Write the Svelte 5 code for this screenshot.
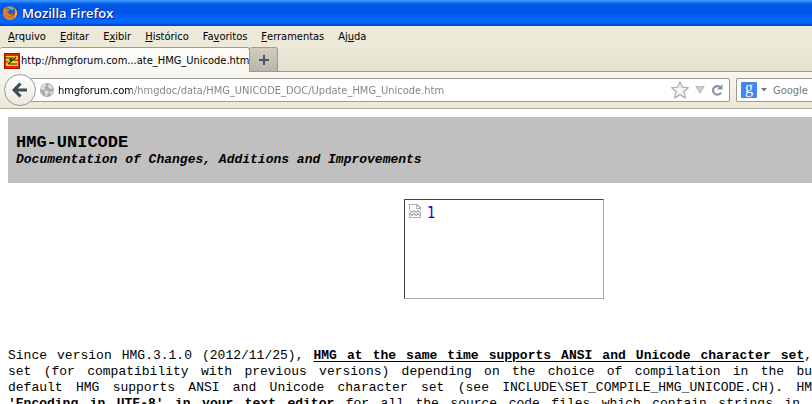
<script>
  const menus = [
    ['', 'A', 'rquivo'],
    ['', 'E', 'ditar'],
    ['E', 'x', 'ibir'],
    ['', 'H', 'istórico'],
    ['Fa', 'v', 'oritos'],
    ['', 'F', 'erramentas'],
    ['Aj', 'u', 'da'],
  ];
  let url = $state('hmgforum.com/hmgdoc/data/HMG_UNICODE_DOC/Update_HMG_Unicode.htm');
  let query = $state('');
</script>

<div class="window">
  <header class="titlebar">
    <svg width="16" height="16" viewBox="0 0 16 16" aria-hidden="true">
      <circle cx="8" cy="8" r="7" fill="#f08a1c" />
      <circle cx="8.2" cy="6.4" r="5.4" fill="#2e62b0" />
      <path d="M5 2.5C7 .8 11 1.5 12 4L10 5 8 4Z" fill="#61b5e6" />
      <path d="M1 6.5C1.3 4 2.3 2.6 3.2 1.5L4.2 3.6C6 3 7 4 7.2 5.3L5.5 6.6C6 9.4 9 10.4 11.5 8.4 10.6 12 5.5 12 4 9 5.6 13.5 12 12.8 13 7.4 13.6 5 12.7 3.3 12 2.4 16 5.2 15.8 10.5 12.6 13.3 7.2 17.5.2 13.5 1 6.5Z" fill="#ec7a18" />
      <path d="M12.7 3.2C15.7 6.2 15.4 10.8 12.2 13 14 10.5 14.2 6.5 12.7 3.2Z" fill="#ffd23c" />
    </svg>
    <span>Mozilla Firefox</span>
  </header>

  <nav class="menubar">
    {#each menus as [before, key, after]}
      <button type="button">{before}<u>{key}</u>{after}</button>
    {/each}
  </nav>

  <div class="tabs">
    <button type="button" class="tab">
      <svg width="16" height="16" viewBox="0 0 16 16" aria-hidden="true">
        <rect width="16" height="16" fill="#b00e0e" />
        <rect x="1" y="1" width="14" height="14" fill="#e32213" />
        <path d="M2 3H14V6L11 8H14V13H2V10L5 8H2Z" fill="#e8d817" />
        <path d="M2 5H8L6 7H12M12 4 4 11M5 11H13" stroke="#3b2506" stroke-width="1.2" fill="none" />
      </svg>
      <span>http://hmgforum.com...ate_HMG_Unicode.htm</span>
    </button>
    <button type="button" class="newtab" aria-label="+">
      <svg width="10" height="10" viewBox="0 0 10 10" aria-hidden="true">
        <path d="M5 0V10M0 5H10" stroke="#46566b" stroke-width="2" />
      </svg>
    </button>
  </div>

  <div class="toolbar">
    <button type="button" class="back" aria-label="Voltar">
      <svg width="18" height="18" viewBox="0 0 18 18" aria-hidden="true">
        <path d="M9.5 2.5 3.2 9 9.5 15.5M4 9H16" stroke="#3f4c5c" stroke-width="3.2" fill="none" />
      </svg>
    </button>
    <div class="field address">
      <svg width="14" height="14" viewBox="0 0 14 14" aria-hidden="true">
        <circle cx="7" cy="7" r="7" fill="#a9a9a9" />
        <path d="M1 4.5 3.5 1.5 6 1 6.5 2.5 4.5 4 5.5 5.5 3.5 7 1.2 6.5ZM8 2.5 10 1.3 12.7 4.5 11.5 6 9.5 5.5 8 4ZM4 8 7 7.2 9.3 9 7.5 11 7 13.2 5.5 12.5 5 10ZM10.5 8.5 13 8 11.5 11.5 10 11Z" fill="#dedede" />
      </svg>
      <input type="text" aria-label="URL" bind:value={url} spellcheck="false" />
      <div class="actions">
        <button type="button" aria-label="Favorito">
          <svg width="18" height="18" viewBox="0 0 16 16" aria-hidden="true">
            <path d="M8 .8 10.1 5.6 15.3 6.1 11.4 9.6 12.6 14.9 8 12.2 3.4 14.9 4.6 9.6.7 6.1 5.9 5.6Z" fill="#f5f5f5" stroke="#a9a9a9" />
          </svg>
        </button>
        <button type="button" aria-label="Abrir lista">
          <svg width="10" height="8" viewBox="0 0 10 8" aria-hidden="true">
            <path d="M.8.5H9.2L5 7.3Z" fill="#cbd0d5" stroke="#b4bbc3" />
          </svg>
        </button>
        <button type="button" aria-label="Recarregar">
          <svg width="12" height="12" viewBox="0 0 12 12" aria-hidden="true">
            <path d="M9 3A4.3 4.3 0 1 0 10 8.5" stroke="#8894a2" stroke-width="2.2" fill="none" />
            <path d="M11.5 0V5.5H6Z" fill="#8894a2" />
          </svg>
        </button>
      </div>
    </div>
    <div class="field search">
      <button type="button" class="engine" aria-label="Google">
        <span class="g">g</span>
        <svg width="6" height="4" viewBox="0 0 6 4" aria-hidden="true">
          <path d="M0 0H6L3 3.6Z" fill="#777" />
        </svg>
      </button>
      <input type="text" aria-label="Pesquisar" placeholder="Google" bind:value={query} />
    </div>
  </div>

  <main>
    <div class="banner">
      <h1>HMG-UNICODE</h1>
      <h2>Documentation of Changes, Additions and Improvements</h2>
    </div>

    <a class="missing" href="#1">
      <svg width="12" height="14" viewBox="0 0 12 14" aria-hidden="true" shape-rendering="crispEdges">
        <path d="M.5 6V.5H8L11.5 4V6M7.5 1V4.5H11M.5 8V13.5H11.5V8" stroke="#b0b0b0" fill="none" />
        <path d="M1 6.5 3 8.5 5 6.5 7 8.5 9 6.5 11 8.5M1 9.5 3 11.5 5 9.5 7 11.5 9 9.5 11 11.5" stroke="#b5b5b5" fill="none" />
      </svg>
      <span>1</span>
    </a>

    <p>
      <span class="line">Since version HMG.3.1.0 (2012/11/25), <b class="underlined">HMG at the same time supports ANSI and Unicode character set</b>,</span>
      <span class="line">set (for compatibility with previous versions) depending on the choice of compilation in the bu</span>
      <span class="line">default HMG supports ANSI and Unicode character set (see INCLUDE\SET_COMPILE_HMG_UNICODE.CH). HM</span>
      <span class="line last"><b>'Encoding in UTF-8' in your text editor</b> for all the source code files which contain strings in</span>
    </p>
  </main>
</div>

<style>
  :global(body) {
    margin: 0;
    background: #fff;
  }
  .window {
    height: 100vh;
    overflow: hidden;
    display: flex;
    flex-direction: column;
    font: 11px/14px 'DejaVu Sans Condensed', 'DejaVu Sans', sans-serif;
    color: #000;
  }
  .window > * {
    flex-shrink: 0;
  }
  button {
    display: flex;
    align-items: center;
    padding: 0;
    border: 0;
    background: none;
    font: inherit;
    color: inherit;
  }
  svg {
    display: block;
    flex: none;
  }
  .titlebar {
    display: flex;
    align-items: center;
    gap: 4px;
    height: 26px;
    padding: 0 2px;
    box-sizing: border-box;
    background: linear-gradient(#3c94fc 0, #2a86fa 2px, #0865ee 3px, #0055e2 6px, #0054e3 12px, #0263fb 18px, #0468ff 23px, #0146d2 25px, #0040c8 26px);
    color: #fff;
    font: 600 13px/16px 'Open Sans', sans-serif;
    text-shadow: 1px 1px #0a1883;
  }
  .menubar {
    display: flex;
    align-items: center;
    gap: 14px;
    height: 21px;
    padding: 0 8px;
    background: #ece9d8;
  }
  .tabs {
    display: flex;
    height: 25px;
    background: linear-gradient(#ece9d8, #e4e0cf) 0 0 / 100% 24px no-repeat #9c9b92;
  }
  .tab {
    gap: 1px;
    width: 250px;
    padding: 2px 0 0 4px;
    box-sizing: border-box;
    border: 1px solid #9c9b92;
    border-width: 1px 1px 0 0;
    border-radius: 3px 3px 0 0;
    background: linear-gradient(#fcfbf8, #f8f6f1);
    white-space: nowrap;
  }
  .newtab {
    justify-content: center;
    width: 28px;
    box-sizing: border-box;
    border: 1px solid #9c9b92;
    border-left: 0;
    border-radius: 2px 3px 0 0;
    background: linear-gradient(#d0cdbf, #b8b6a9);
  }
  .toolbar {
    display: flex;
    align-items: center;
    height: 37px;
    padding-left: 4px;
    box-sizing: border-box;
    background: linear-gradient(#f8f6f1, #ece9d8);
    border-bottom: 1px solid #aca899;
  }
  .back {
    position: relative;
    justify-content: center;
    flex: none;
    width: 32px;
    height: 32px;
    box-sizing: border-box;
    border: 1px solid #999a98;
    border-radius: 50%;
    background: linear-gradient(#fff, #ece9dc);
  }
  .field {
    display: flex;
    align-items: center;
    height: 24px;
    box-sizing: border-box;
    border: 1px solid #9c9b92;
    background: #fff;
  }
  .address {
    flex: 1;
    gap: 4px;
    min-width: 0;
    margin-left: -6px;
    padding: 0 6px 0 9px;
    border-radius: 0 2px 2px 0;
  }
  .actions {
    display: flex;
    align-items: center;
    gap: 6px;
  }
  .search {
    flex: none;
    width: 76px;
    margin-left: 6px;
    padding-left: 4px;
    gap: 6px;
    box-sizing: border-box;
    border-right: 0;
    border-radius: 2px 0 0 2px;
  }
  input {
    flex: 1;
    min-width: 0;
    width: 0;
    padding: 2px 0 0;
    border: 0;
    outline: 0;
    background: none;
    font: inherit;
    line-height: 16px;
    color: #777;
  }
  .address input {
    background: linear-gradient(90deg, #000 74px, #808080 74px);
    background-clip: text;
    -webkit-background-clip: text;
    color: transparent;
    caret-color: #000;
  }
  .search input::placeholder {
    color: #777;
    opacity: 1;
  }
  .engine {
    gap: 4px;
  }
  .g {
    width: 16px;
    height: 16px;
    border-radius: 1px;
    background: #4285f4;
    color: #fff;
    font: 16px/12px 'Liberation Serif', serif;
    text-align: center;
  }
  main {
    padding: 8px 0 0 8px;
    font: 13px/16px 'Liberation Mono', 'Courier New', monospace;
  }
  .banner {
    height: 66px;
    padding: 17px 8px;
    box-sizing: border-box;
    background: #c0c0c0;
  }
  h1,
  h2 {
    margin: 0;
    white-space: nowrap;
  }
  h1 {
    font-size: 17px;
    line-height: 18px;
  }
  h2 {
    font-size: 13px;
    line-height: 16px;
    font-style: italic;
  }
  .missing {
    display: flex;
    gap: 6px;
    width: 200px;
    height: 100px;
    margin: 16px 0 0 396px;
    padding: 4px;
    box-sizing: border-box;
    border: 1px solid;
    border-color: #444 #aaa #aaa #444;
    color: #0000ee;
    font: 15px/18px 'DejaVu Sans Condensed', 'DejaVu Sans', sans-serif;
    text-decoration: none;
  }
  p {
    margin: 49px 0 0;
  }
  .line {
    display: block;
    white-space: nowrap;
    text-align: justify;
    text-align-last: justify;
  }
  .last {
    padding-right: 12px;
  }
  .underlined {
    text-decoration: underline;
    text-underline-offset: 2px;
  }
</style>
